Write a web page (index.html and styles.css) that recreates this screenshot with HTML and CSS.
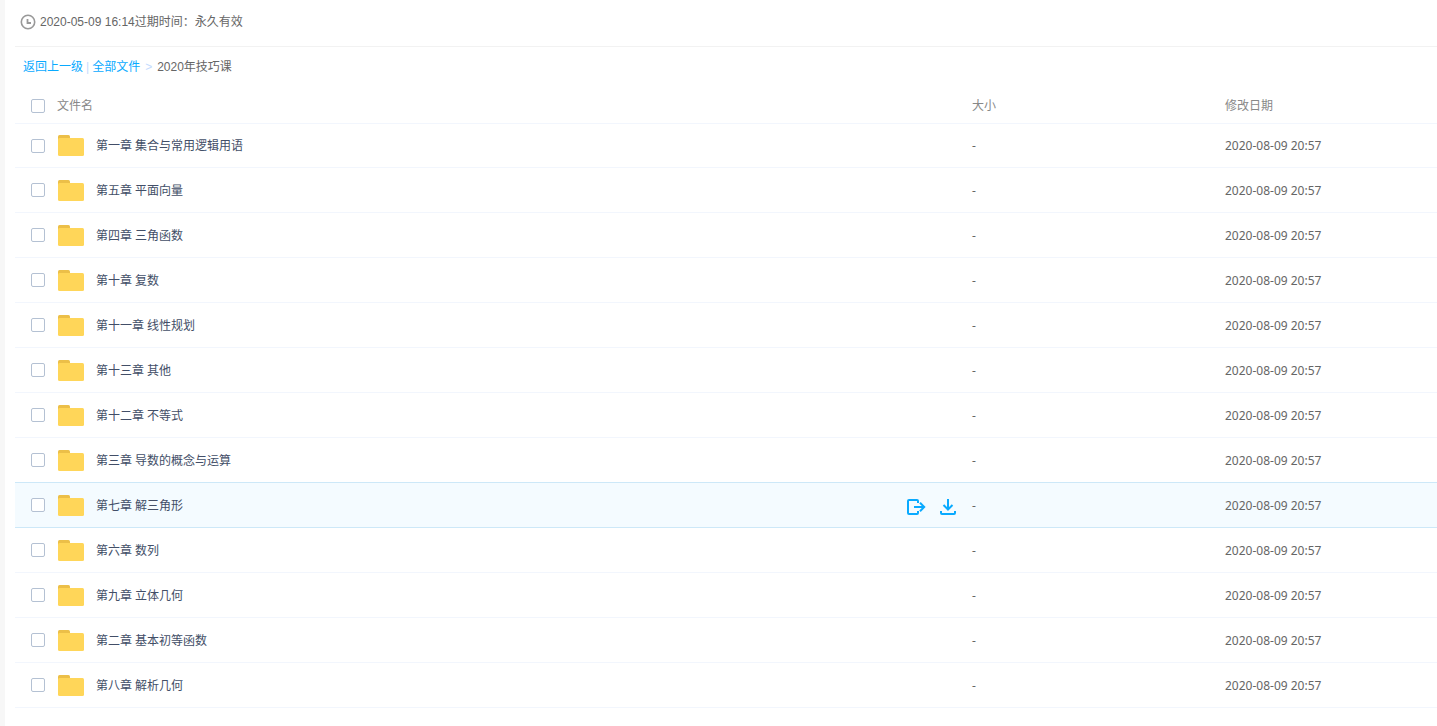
FILE: index.html
```html
<!DOCTYPE html>
<html lang="zh-CN">
<head>
    <meta charset="UTF-8">
    <meta name="viewport" content="width=device-width, initial-scale=1.0">
    <title>2020年技巧课</title>
    <link rel="stylesheet" href="styles.css">
</head>
<body>
    <svg class="sprite" aria-hidden="true">
        <symbol id="folder" viewBox="0 0 26 21">
            <path fill="#ecbf48" d="M0 5V1.500Q0 0 1.500 0H10.500Q12 0 12 1.500V5z"/>
            <rect y="3" width="26" height="18" rx="1.500" fill="#ffd659"/>
        </symbol>
    </svg>
    <main class="container">
        <div class="share-info">
            <svg class="clock" viewBox="0 0 16 16" aria-hidden="true">
                <circle cx="8" cy="8" r="6.700" fill="none" stroke="#999" stroke-width="1.600"/>
                <path d="M7.500 5v4H11" fill="none" stroke="#999" stroke-width="1.800"/>
            </svg>
            <span>2020-05-09 16:14过期时间：永久有效</span>
        </div>
        <nav class="breadcrumb">
            <a href="#">返回上一级</a>
            <span class="sep">|</span>
            <a href="#">全部文件</a>
            <span class="sep arrow">&gt;</span>
            <span>2020年技巧课</span>
        </nav>
        <table class="file-list">
            <colgroup>
                <col class="col-check">
                <col>
                <col class="col-size">
                <col class="col-date">
            </colgroup>
            <thead>
                <tr>
                    <th><input type="checkbox" aria-label="全选"></th>
                    <th>文件名</th>
                    <th>大小</th>
                    <th>修改日期</th>
                </tr>
            </thead>
            <tbody id="files"></tbody>
        </table>
    </main>

    <script>
        const folders = [
            '第一章 集合与常用逻辑用语',
            '第五章 平面向量',
            '第四章 三角函数',
            '第十章 复数',
            '第十一章 线性规划',
            '第十三章 其他',
            '第十二章 不等式',
            '第三章 导数的概念与运算',
            '第七章 解三角形',
            '第六章 数列',
            '第九章 立体几何',
            '第二章 基本初等函数',
            '第八章 解析几何'
        ];
        const activeFolder = '第七章 解三角形';

        const actions = `
            <div class="actions">
                <button type="button" aria-label="转存">
                    <svg width="20" height="18" viewBox="0 0 20 18">
                        <path d="M12 5V3Q12 2 11 2H3Q2 2 2 3V15Q2 16 3 16H11Q12 16 12 15V13M8 9H18M14 4.800L18.200 9L14 13.200"/>
                    </svg>
                </button>
                <button type="button" aria-label="下载">
                    <svg width="18" height="18" viewBox="0 0 18 18">
                        <path d="M9 1V11M4.500 7L9 11.500L13.500 7M2 13V15Q2 16 3 16H15Q16 16 16 15V13"/>
                    </svg>
                </button>
            </div>`;

        document.getElementById('files').innerHTML = folders.map((name, i) => `
            <tr class="${name === activeFolder ? 'active' : ''}">
                <td><input type="checkbox" id="file${i}"></td>
                <td>
                    <div class="name">
                        <svg class="folder" aria-hidden="true"><use href="#folder"/></svg>
                        <label for="file${i}">${name}</label>
                        ${name === activeFolder ? actions : ''}
                    </div>
                </td>
                <td class="text">-</td>
                <td class="text">2020-08-09 20:57</td>
            </tr>`).join('');
    </script>
</body>
</html>
```
FILE: styles.css
```css
body {
    margin: 0;
    background-color: #fff;
    border-left: 5px solid #f7f7f7;
    color: #666;
    font-family: "Liberation Sans", "Noto Sans CJK SC", sans-serif;
    font-size: 12px;
    line-height: 18px;
}
.sprite {
    display: none;
}
.container {
    box-sizing: border-box;
    min-height: 100vh;
    padding-left: 10px;
}
.share-info {
    display: flex;
    align-items: center;
    gap: 4px;
    height: 47px;
    padding: 0 0 2px 5px;
    box-sizing: border-box;
    border-bottom: 1px solid #f2f2f2;
}
.clock {
    width: 16px;
    height: 16px;
}
.breadcrumb {
    display: flex;
    align-items: center;
    gap: 3px;
    height: 40px;
    padding-left: 8px;
}
.breadcrumb a {
    color: #09aaff;
    text-decoration: none;
}
.sep {
    color: #c4dbfe;
}
.arrow {
    margin: 0 2px;
}
.file-list {
    width: 100%;
    table-layout: fixed;
    border-spacing: 0;
}
.col-check {
    width: 42px;
}
.col-size {
    width: 253px;
}
.col-date {
    width: 212px;
}
th, td {
    box-sizing: border-box;
    height: 45px;
    padding: 0;
    text-align: left;
    vertical-align: middle;
    border-bottom: 1px solid #f2f6fd;
}
th {
    height: 37px;
    padding-top: 1px;
    color: #888;
    font-weight: normal;
}
td {
    font-family: "Noto Sans", "Noto Sans CJK SC", sans-serif;
}
td.text {
    padding-top: 2px;
}
tbody tr:first-child td {
    height: 44px;
    padding: 0;
}
input[type="checkbox"] {
    appearance: none;
    display: block;
    box-sizing: border-box;
    width: 14px;
    height: 14px;
    margin: 0 0 0 16px;
    background-color: #fff;
    border: 1px solid #b4c1d3;
    border-radius: 2px;
}
input[type="checkbox"]:checked {
    background-color: #09aaff;
    border-color: #09aaff;
}
.name {
    display: flex;
    align-items: center;
    padding: 0 15px 0 1px;
    color: #424e67;
}
.name label {
    padding-top: 1px;
}
.folder {
    width: 26px;
    height: 21px;
    margin-right: 12px;
}
.actions {
    display: flex;
    gap: 13px;
    margin-left: auto;
}
.actions button {
    display: flex;
    padding: 3px 0 0;
    border: 0;
    background: none;
    cursor: pointer;
}
.actions path {
    fill: none;
    stroke: #09aaff;
    stroke-width: 2;
}
.active td {
    background-color: #f4fbff;
    border-bottom-color: #cde8f8;
    box-shadow: 0 -1px #cde8f8;
}
```
